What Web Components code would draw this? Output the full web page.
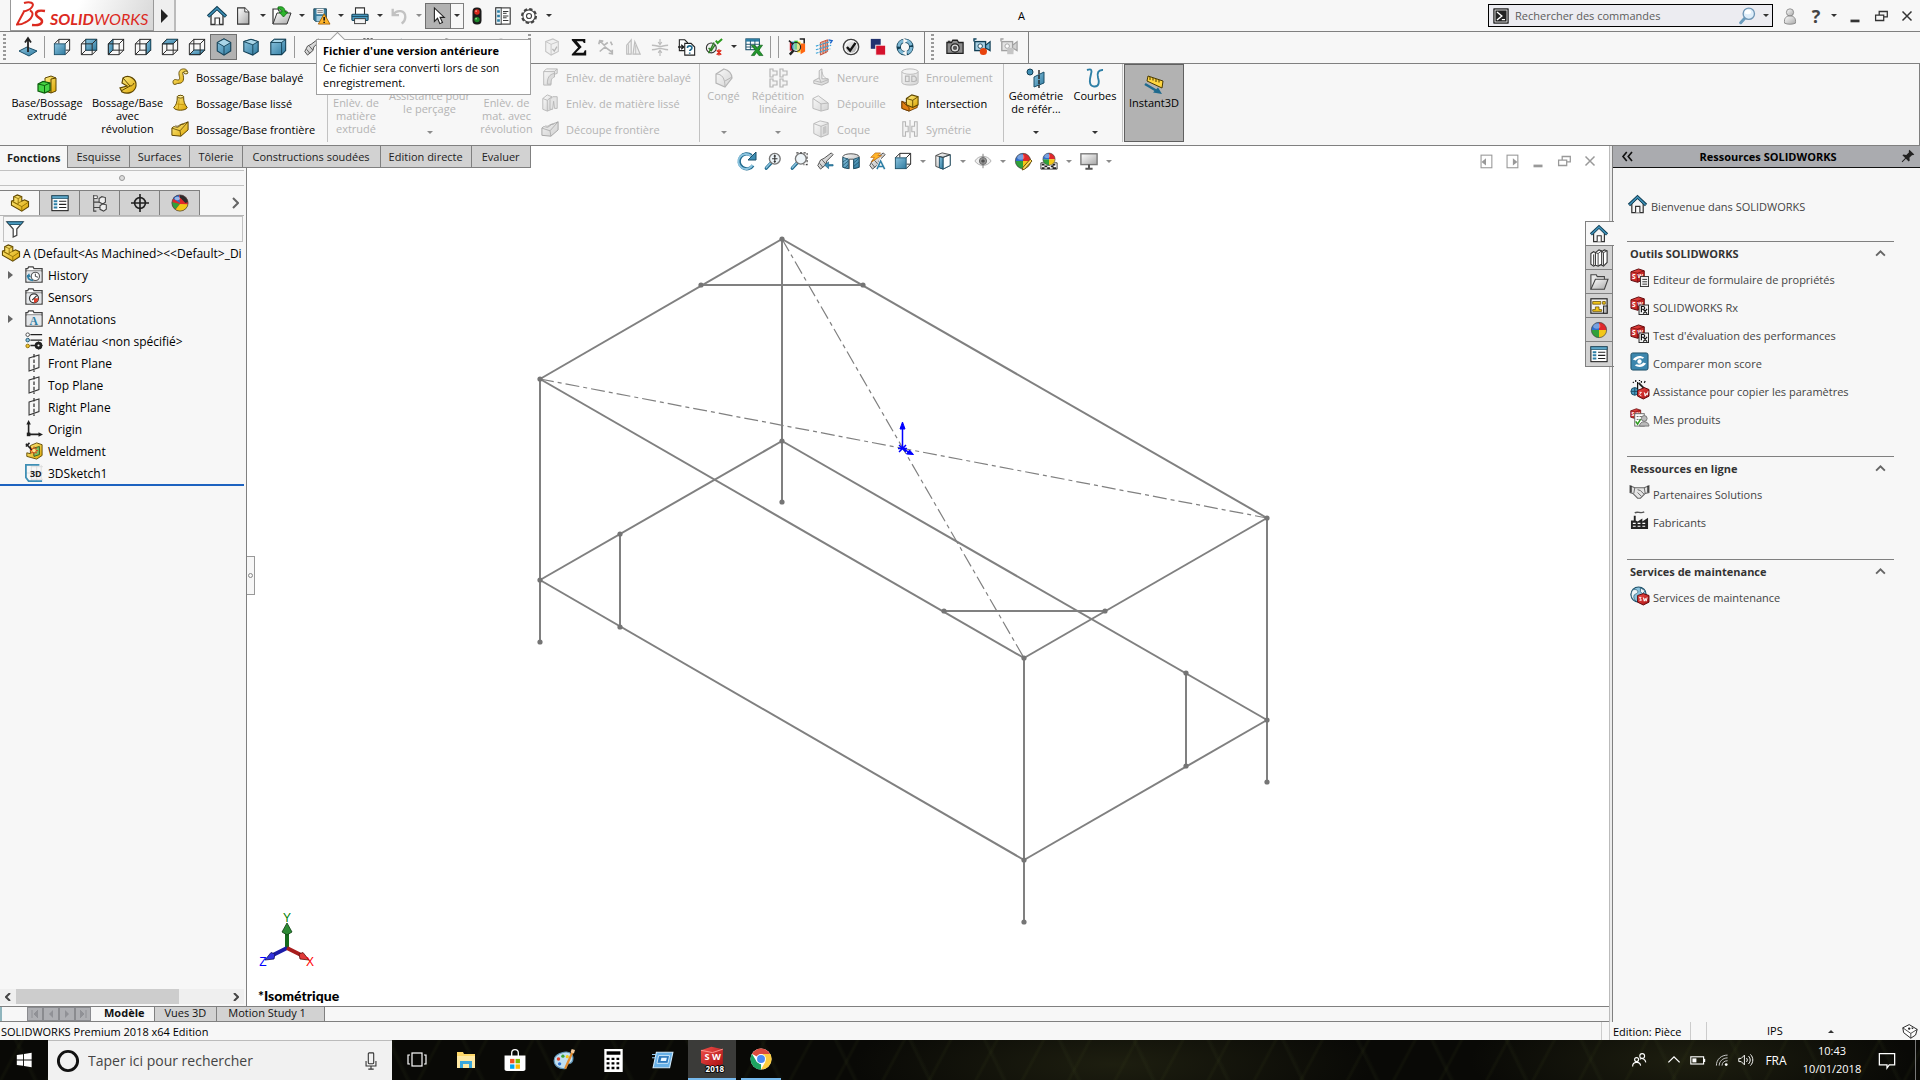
<!DOCTYPE html>
<html lang="fr">
<head>
<meta charset="utf-8">
<title>SOLIDWORKS Premium 2018 x64 Edition</title>
<style>
    html, body {
        margin: 0;
        height: 100%;
    }
    body {
        font-family: "Open Sans", "Noto Sans", sans-serif;
        font-size: 11px;
        line-height: 13px;
        color: #000;
        background: #f7f7f7;
        overflow: hidden;
        --line: #808080;
        --bar: #f7f7f7;
        --tab: #d2d2d2;
    }
</style>
</head>
<body>
<sw-app></sw-app>

<script>
/////////// Icons \\\\\\\\\ every icon is drawn on a 20x20 grid
const DEFS = `
<defs>
    <linearGradient id="blue" x1="0" y1="0" x2="1" y2="1"><stop offset="0" stop-color="#8cc4df"/><stop offset="1" stop-color="#2f7ba0"/></linearGradient>
    <linearGradient id="gold" x1="0" y1="0" x2="1" y2="1"><stop offset="0" stop-color="#fff08a"/><stop offset="1" stop-color="#dca400"/></linearGradient>
    <linearGradient id="steel" x1="0" y1="0" x2="1" y2="1"><stop offset="0" stop-color="#ffffff"/><stop offset="1" stop-color="#a8a8a8"/></linearGradient>
    <linearGradient id="red" x1="0" y1="0" x2="1" y2="1"><stop offset="0" stop-color="#f0504a"/><stop offset="1" stop-color="#a80d10"/></linearGradient>
</defs>`;

// wire cube with one blue face, used for the standard views
function viewCube(points) {
    return `<g fill="none" stroke="#2a2a2a" stroke-width="1.1"><rect x="6.5" y="1.5" width="12" height="12"/></g>
        <polygon points="${points}" fill="url(#blue)" stroke="#1b4f68"/>
        <path d="M1.5 6.5h12v12h-12zM1.5 6.5l5-5M13.5 6.5l5-5M13.5 18.5l5-5M1.5 18.5l5-5" fill="none" stroke="#2a2a2a" stroke-width="1.1"/>`;
}
// solid front face hides the edges behind it
const frontCube = `<path d="M6.5 6V1.5h12v12H14M1.5 6.5l5-5M13.5 6.5l5-5M13.5 18.5l5-5" fill="none" stroke="#2a2a2a" stroke-width="1.1"/>
    <rect x="1.5" y="6.5" width="12" height="12" fill="url(#blue)" stroke="#1b4f68"/>`;
// red SW box, top left part of most task pane icons
const swBox = `<path d="M1 4l8-3 6 2v9l-7 3-7-2z" fill="url(#red)" stroke="#5c0508"/><path d="M1 4l7 1.5 7-2.5M8 5.5V15" fill="none" stroke="#7a0a0c" stroke-width=".8"/>
    <text x="2.2" y="11.5" font-size="7" font-weight="700" fill="#fff">S</text><text x="8" y="11" font-size="6" font-weight="700" fill="#fff">W</text>`;
const folder = `<path d="M1 18V3h2l1-2h5l1 2h9v15z" fill="#fff" stroke="#444" stroke-width="1.4"/><path d="M1 5.5h18" stroke="#444"/><rect x="2" y="6" width="16" height="11" fill="#e4e7ea"/>`;
const planeShape = `<path d="M4.5 4.5l11-3.5v14l-11 4z" fill="none" stroke="#333" stroke-width="1.2"/><path d="M10 0v20" stroke="#333" stroke-width="1.4" stroke-dasharray="4 2"/>`;
const ball = `<circle cx="10" cy="10" r="8.5" fill="#f2f2f2"/><path d="M10 10V1.5A8.5 8.5 0 0 1 18.5 10z" fill="#e0282c"/><path d="M10 10h8.5A8.5 8.5 0 0 1 10 18.5z" fill="#f3c718"/>
    <path d="M10 10v8.5A8.5 8.5 0 0 1 1.5 10z" fill="#30a13a"/><path d="M10 10H1.5A8.5 8.5 0 0 1 10 1.5z" fill="#2e6fd0"/><ellipse cx="7.5" cy="5.5" rx="4" ry="3" fill="#fff" opacity=".35"/><circle cx="10" cy="10" r="8.5" fill="none" stroke="#444" stroke-width=".8"/>`;
const part = `<path d="M3 3l4-2 5 2v5l3-1.5 4.5 2V14L12 19 .5 12.5V8L3 7z" fill="url(#gold)" stroke="#5f4700" stroke-width="1.2"/>
    <path d="M3 3l5 2 4-2M8 5v5l4-2M.5 8l11.5 6 7.5-5M12 14v5M3 7v2l5 2.5V10" fill="none" stroke="#8b6a00" stroke-width=".9"/>`;
const house = `<path d="M4 9v9.5h12V9l-6-6z" fill="#f5f5f5" stroke="#333" stroke-width="1.3"/><path d="M8 18.5V12h4.5v6.5" fill="#fff" stroke="#333" stroke-width="1.2"/><path d="M1 10.5l9-8.5 9 8.5" fill="none" stroke="#123f55" stroke-width="3.4"/><path d="M1.5 10.2l8.5-8 8.5 8" fill="none" stroke="#3f93bb" stroke-width="1.5"/>`;
const listing = `<rect x="1" y="2" width="18" height="16.5" fill="#fff" stroke="#222" stroke-width="1.2"/><rect x="1" y="2" width="18" height="3" fill="#5da6c8" stroke="#1b4f68" stroke-width=".8"/>
    <path d="M3 8h4M3 11.5h4M3 15h4" stroke="#2d7fa6" stroke-width="2.2"/><path d="M9 8h8M9 11.5h8M9 15h8" stroke="#222" stroke-width="1.2"/>`;
const lens = `<path d="M2.5 18l5.5-6" stroke="#1f6a8e" stroke-width="3.6" stroke-linecap="round"/><path d="M2.5 17.5l5-5.5" stroke="#8cc4df" stroke-width="1.6" stroke-linecap="round"/><circle cx="12" cy="7.5" r="6" fill="#eef5f9" stroke="#777" stroke-width="1.5"/>`;
const torch = `<path d="M2 15l3 4 6-5 1-4 7-7-2-2-8 6-4 2z" fill="url(#steel)" stroke="#444"/><path d="M7 9l4 4.5M4 12.5l3.5 4.5" stroke="#555"/>`;
const camcorder = `<rect x="2" y="4" width="12" height="10" fill="#a8d0e3" stroke="#123f55" stroke-width="1.5"/><path d="M1 4V1h3M14 8l5-4v10l-5-3z" fill="#6cb1d1" stroke="#123f55" stroke-width="1.3"/><circle cx="8" cy="9" r="2.5" fill="#fff" stroke="#123f55"/>`;
const person = `<circle cx="10" cy="6" r="4" fill="url(#steel)" stroke="#888"/><path d="M4 18c-1-6 2-8 6-8s7 2 6 8c-3 1.5-9 1.5-12 0z" fill="url(#steel)" stroke="#888"/>`;

const ICONS = {
    home: house,
    newdoc: `<path d="M4 1h8l4.5 4.5V19H4z" fill="url(#steel)" stroke="#333" stroke-width="1.2"/><path d="M12 1v4.5h4.5" fill="#fff" stroke="#333"/>`,
    open: `<path d="M1 18V3h5l1 2h7v3" fill="#fff" stroke="#333" stroke-width="1.2"/><path d="M1 18L5 7h14l-4 11z" fill="url(#steel)" stroke="#333"/><path d="M6 1c5-1 7 1 7 5h3l-4.5 5L7 6h3c0-2-1-3-4-3z" fill="#2db52d" stroke="#10690f" stroke-width=".8"/>`,
    save: `<path d="M2 2h14v14H4l-2-2z" fill="#397e9f" stroke="#173f52"/><rect x="5" y="2" width="8" height="6" fill="#f3f3f3"/><path d="M6 4h6M6 6h6" stroke="#555" stroke-width=".8"/><rect x="5" y="10" width="7" height="6" fill="#9fcadd"/><path d="M13.5 7.5L20 19H7z" fill="#ffb52b" stroke="#9b5700" stroke-width=".9"/><path d="M13.5 11v4M13.5 16.5v1.3" stroke="#111" stroke-width="1.7"/>`,
    print: `<path d="M5 8V1h10v7" fill="#fff" stroke="#333" stroke-width="1.2"/><rect x="1" y="8" width="18" height="7" rx="1" fill="#4b9cc1" stroke="#16465d" stroke-width="1.2"/><path d="M1 10.5h18" stroke="#16465d"/><rect x="4" y="13" width="12" height="5.5" fill="#f4f4f4" stroke="#333"/>`,
    undo: `<path d="M3 2v7h7M3.5 8.5C8 2 17 4 17 11c0 3-1.5 5.5-4 7.5" fill="none" stroke="#c2c2c2" stroke-width="2.6"/>`,
    pointer: `<path d="M6 1v15l3.5-3.5L12 18.5l3-1.3-2.7-5.7h4.7z" fill="#fff" stroke="#222" stroke-width="1.2"/>`,
    traffic: `<rect x="5" y=".5" width="10" height="19" rx="4.5" fill="#1b1b1b"/><circle cx="10" cy="5.5" r="3" fill="#d8281c"/><circle cx="9" cy="4.5" r="1" fill="#ff9b8c"/><circle cx="10" cy="14" r="3" fill="#1d8a2b"/><circle cx="9" cy="13" r="1" fill="#8fe08f"/>`,
    listbox: `<rect x="2" y="1" width="16" height="18" fill="#fff" stroke="#333" stroke-width="1.2"/><rect x="2" y="1" width="6" height="18" fill="#eaf3f7" stroke="#333"/><path d="M3.5 5h3M3.5 10h3M3.5 15h3" stroke="#2d7fa6" stroke-width="3"/><path d="M10 5h6M10 7h4M10 10h6M10 12h4M10 15h6" stroke="#222"/>`,
    gear: `<circle cx="10" cy="10" r="7.6" fill="none" stroke="#444" stroke-width="2.6" stroke-dasharray="3.6 2.37"/><circle cx="10" cy="10" r="6.8" fill="#fff" stroke="#444" stroke-width="1.2"/><circle cx="10" cy="10" r="2.8" fill="none" stroke="#444" stroke-width="1.3"/>`,
    command: `<rect x="1" y="1" width="18" height="18" fill="#222" stroke="#111"/><rect x="2.5" y="2.5" width="15" height="15" fill="none" stroke="#fff"/><path d="M5 5l6 5-6 5" fill="none" stroke="#fff" stroke-width="1.8"/><path d="M11 14.5h4" stroke="#fff" stroke-width="1.5"/>`,
    lens: `<path d="M3 17.5l5-5.5" stroke="#6a9cbd" stroke-width="3.4" stroke-linecap="round"/><circle cx="12" cy="7.5" r="6.3" fill="#dfeefa" stroke="#6f96b5" stroke-width="1.5"/><ellipse cx="11" cy="5.5" rx="3.5" ry="2.5" fill="#fff"/>`,
    user: person,
    normal: `<path d="M1 14l8-4 10 4-8 5z" fill="url(#blue)" stroke="#1b4f68"/><path d="M10 15V2M7 5.5L10 1l3 4.5" fill="none" stroke="#222" stroke-width="1.8"/>`,
    front: frontCube,
    back: viewCube('6.5,1.5 18.5,1.5 18.5,13.5 6.5,13.5'),
    left: viewCube('1.5,6.5 6.5,1.5 6.5,13.5 1.5,18.5'),
    right: viewCube('13.5,6.5 18.5,1.5 18.5,13.5 13.5,18.5'),
    top: viewCube('1.5,6.5 6.5,1.5 18.5,1.5 13.5,6.5'),
    bottom: viewCube('1.5,18.5 6.5,13.5 18.5,13.5 13.5,18.5'),
    iso: `<path d="M10 1l7.5 4v9.5L10 19l-7.5-4.5V5z" fill="url(#blue)" stroke="#123f55" stroke-width="1.2"/><path d="M10 1l7.5 4L10 9.5 2.5 5z" fill="#a9d5e8" stroke="#123f55"/><path d="M10 9.5V19" stroke="#123f55"/>`,
    dimetric: `<path d="M2 4l8-2.5L18 4v11l-6 4-10-4z" fill="url(#blue)" stroke="#123f55" stroke-width="1.2"/><path d="M2 4l10 3.5L18 4l-8-2.5z" fill="#a9d5e8" stroke="#123f55"/><path d="M12 7.5V19" stroke="#123f55"/>`,
    trimetric: `<path d="M2 5l4-3.5h12.5V14L14 18.5H2z" fill="url(#blue)" stroke="#123f55" stroke-width="1.2"/><path d="M2 5l4-3.5h12.5L14 5z" fill="#a9d5e8" stroke="#123f55"/><path d="M14 5v13.5" stroke="#123f55"/>`,
    torch: torch,
    checkcube: `<path d="M3 4l8-3 6 3v11l-8 4-6-4z" fill="#e8e8e8" stroke="#888" stroke-width="1.2"/><path d="M3 4l6 3 8-3M9 7v12" fill="none" stroke="#888"/><path d="M10.5 12l2 2.5 3-5" fill="none" stroke="#666" stroke-width="1.5"/>`,
    sigma: `<path d="M2 1h15v4.5h-1.5L14 3.5H7.5L13 10l-6.5 6.5H15l1.5-3H18V19.5H2V18l7-7.5L2 2.5z" fill="#111"/>`,
    nodes: `<path d="M3 3l5 5 4-3M3 15l6-5 8 6M15 4l2 4M2 7l1-4 4 .5M13 17l4 .5V13" fill="none" stroke="#666" stroke-width="1.8"/>`,
    sections: `<path d="M3 18V8l5-6v16zM10 18l2-14 6 14z" fill="#e5e5e5" stroke="#777" stroke-width="1.3"/><path d="M5 18V7M13 18V8" stroke="#777"/>`,
    thickness: `<path d="M1 8c6 0 6 1.5 9 1.5S14 8 19 8M1 13c6 0 6-1.5 9-1.5s4 1.5 9 1.5" fill="none" stroke="#777" stroke-width="1.6"/><path d="M10 1v6M8 4.5l2 3 2-3M10 20v-6M8 16.5l2-3 2 3" fill="none" stroke="#777" stroke-width="1.3"/>`,
    docquestion: `<path d="M1.5 2h6l3 3v9h-9z" fill="#fff" stroke="#222" stroke-width="1.2"/><path d="M7.5 6h7l4 4v9h-11z" fill="#fff" stroke="#222" stroke-width="1.2"/><path d="M0 10h6M3.5 7.5l3 2.5-3 2.5" fill="none" stroke="#222" stroke-width="1.5"/><path d="M10.5 11c0-3 5-3 5 0 0 2-2.5 2-2.5 3.5M13 16v1.6" fill="none" stroke="#1f6a8e" stroke-width="1.8"/>`,
    checks: `<circle cx="7" cy="11" r="5.5" fill="#eee" stroke="#333" stroke-width="1.2"/><path d="M4 17l6-12M4 11l3 3 4-6" fill="none" stroke="#2b7d22" stroke-width="1.6"/><path d="M12 3l2 2.5L19 1" fill="none" stroke="#2c9a1d" stroke-width="2.2"/><path d="M13 13.5l5 5M18 13.5l-5 5M15.5 12.5v7" stroke="#de2a1b" stroke-width="1.6"/>`,
    excel: `<rect x="1" y="1" width="15" height="12" fill="#fff" stroke="#1b4f68" stroke-width="1.2"/><path d="M1 2.5h15" stroke="#2d7fa6" stroke-width="3"/><path d="M1 7h15M1 10h15M6 3v10M11 3v10" stroke="#1b4f68"/><path d="M7 8h4l2.5 3.5L16 8h3.5l-4 5.5L20 19.5h-4.5L13 16l-2.5 3.5H7l4.5-6z" fill="#22962c" stroke="#0c5d16" stroke-width=".7"/>`,
    rainbow: `<path d="M2 5h3v9H2z" fill="#d12"/><path d="M4 4h3v9H4z" fill="#28c"/><path d="M7 3h4v10H7z" fill="#2b3"/><path d="M10 4h4v12h-4z" fill="#fd2"/><path d="M14 6h5v9l-5 3z" fill="#f61"/><path d="M1 3l5 4M13 1h5v5" fill="none" stroke="#222" stroke-width="1.7"/><circle cx="9" cy="10" r="5" fill="#bfe0f0" fill-opacity=".5" stroke="#222" stroke-width="1.3"/><path d="M2 18.5l4-4.5" stroke="#222" stroke-width="2.6"/>`,
    flow: `<path d="M6 5l8-3v13l-8 4z" fill="#e6b7aa" stroke="#c14b33"/><path d="M9 5v13M12 3v14" stroke="#c14b33"/><path d="M1 9l16-5M1 13l17-5M1 17l16-5" stroke="#3aa3d8" stroke-width="1.3" stroke-dasharray="3 1"/><path d="M15 2l4 1-2 3" fill="none" stroke="#1660c8" stroke-width="1.5"/>`,
    approve: `<circle cx="10" cy="10" r="8.5" fill="#fff" stroke="#444" stroke-width="1.6"/><circle cx="10" cy="10" r="6.5" fill="url(#steel)"/><path d="M5.5 10l3.5 4 6-8.5" fill="none" stroke="#111" stroke-width="2.6"/>`,
    squares: `<rect x="2" y="1" width="11" height="11" fill="#22326f"/><rect x="7.5" y="8" width="11" height="11" fill="#d5122c" stroke="#f7f7f7"/>`,
    sync: `<circle cx="10" cy="10" r="7" fill="none" stroke="#123f55" stroke-width="5"/><circle cx="10" cy="10" r="7" fill="none" stroke="#7fb9d6" stroke-width="3.2" stroke-dasharray="8 3"/><path d="M8 0l5 3-5 4M12 20l-5-3 5-4" fill="#f7f7f7"/>`,
    camera: `<path d="M1 5h5l1.5-2.5h5L14 5h5v12H1z" fill="#8d8d8d" stroke="#222" stroke-width="1.4"/><circle cx="10" cy="11" r="4.6" fill="#ddd" stroke="#222" stroke-width="1.4"/><circle cx="10" cy="11" r="2.4" fill="#555"/><rect x="2" y="3" width="3" height="2" fill="#333"/>`,
    record: `${camcorder}<circle cx="11.5" cy="15" r="4" fill="#e8430d"/>`,
    recordstop: `${camcorder}<rect x="8" y="11" width="7" height="7" fill="#888"/>`,
    extrude: `<path d="M8 3l6-2 5 2v13l-5 2-6-2z" fill="url(#gold)" stroke="#5f4700"/><path d="M14 4v14M14 4l5-1" stroke="#5f4700" fill="none"/><path d="M1 9l5-2.5L13 8v7.5L7.5 18 1 16z" fill="#45d445" stroke="#0c5d0c" stroke-width="1.2"/><path d="M1 9l6.5 1.5L13 8M7.5 10.5V18" fill="none" stroke="#0c5d0c"/>`,
    revolve: `<path d="M5 3c6-4 14 1 13 8-1 6-8 9-14 6l-2-4 7-2-5-3z" fill="url(#gold)" stroke="#5f4700" stroke-width="1.2"/><path d="M5 3l7 8-9 5M12 11c2 0 3-1 4-3" fill="none" stroke="#5f4700"/>`,
    sweep: `<path d="M3 18c-2-3 0-6 3-5 4 1 4-1 3-5-1-5 2-7 5-7s5 2 4 5l-4-1c0-1-1-1-1 1 2 6 1 11-4 11-3 0-4 2-6 1z" fill="url(#gold)" stroke="#5f4700"/><ellipse cx="16.5" cy="5" rx="2.2" ry="1.6" fill="#fff0a0" stroke="#5f4700"/>`,
    loft: `<path d="M7 3c1-2 6-2 7 0 0 6 1 8 4 12-1 4-14 4-15 0 3-3 4-6 4-12z" fill="url(#gold)" stroke="#5f4700" stroke-width="1.1"/><ellipse cx="10.5" cy="3" rx="3.5" ry="1.5" fill="#fff0a0" stroke="#5f4700"/><path d="M6 11l9 1M8 18l1-12" stroke="#b98b00" stroke-width=".8"/>`,
    boundary: `<path d="M1 9c3-4 5 1 8-2s6-3 10-5v9l-8 7-10-1z" fill="url(#gold)" stroke="#5f4700" stroke-width="1.1"/><path d="M1 9l9 3 9-10M10 12l1 6M5 6c3 3 5-3 9-1" fill="none" stroke="#5f4700" stroke-width=".9"/>`,
    cutsweep: `<path d="M3 4l3-3h12v5l-3 1c-4 1-4 5-4 12H3z" fill="url(#steel)" stroke="#666"/><path d="M7 18c0-7 2-11 8-12v4c-3 1-4 3-4 8z" fill="#bbb" stroke="#666"/><path d="M3 4h12l3-3M15 4v3" fill="none" stroke="#666"/>`,
    cutloft: `<path d="M2 5l5-4 5 2v14l-5 2-5-2z" fill="url(#steel)" stroke="#666"/><path d="M10 6l3-3h5v13h-3l-1-8-1 9h-3z" fill="#ccc" stroke="#666"/><path d="M2 5l5 2 5-4M7 7v12" fill="none" stroke="#666"/>`,
    fillet: `<path d="M2 6l8-5c5 1 8 5 8 9l-7 9-9-4z" fill="url(#steel)" stroke="#666" stroke-width="1.2"/><path d="M2 6c6 0 9 4 9 13M11 13l7-4" fill="none" stroke="#666"/>`,
    pattern: `<path d="M2 1h3v2h4v4H5v2H2zM12 1h3v2h4v4h-4v2h-3zM2 11h3v2h4v4H5v2H2zM12 11h3v2h4v4h-4v2h-3z" fill="#eee" stroke="#666" stroke-width="1.2"/>`,
    rib: `<path d="M2 14l6-3V3l3-2v11l7 0v4l-7 3-9-2z" fill="url(#steel)" stroke="#666" stroke-width="1.1"/><path d="M11 4c1 5 3 7 6 8M2 14l8 2 8-3M8 11l2 5" fill="none" stroke="#666"/>`,
    draft: `<path d="M1 5l6-3 11 8v7l-8 2-9-3z" fill="url(#steel)" stroke="#666"/><path d="M1 5l9 6 8-1M10 11v8" fill="none" stroke="#666"/>`,
    shell: `<path d="M2 4l7-3 9 2v13l-8 3-8-4z" fill="url(#steel)" stroke="#666"/><path d="M2 4l8 3 8-3M10 7v12" fill="none" stroke="#666"/><path d="M12 8l4-2v8l-4 2z" fill="#888"/>`,
    wrap: `<path d="M1 4v12c0 4 18 4 18 0V4" fill="url(#steel)" stroke="#666"/><ellipse cx="10" cy="4" rx="9" ry="3" fill="#eee" stroke="#666"/><path d="M5 9h4v6H5zM12 9h3l2 2v3l-2 1h-3z" fill="none" stroke="#666" stroke-width="1.3"/>`,
    intersect: `<path d="M1 8l5 2v-4h4v8l8-4v5l-9 4-8-3z" fill="#f59a1c" stroke="#6b3a00"/><path d="M6 5l6-4 7 2v9l-6 3-7-3z" fill="url(#gold)" stroke="#5f4700" stroke-width="1.2"/><path d="M6 5l7 2 6-4M13 7v8" fill="none" stroke="#5f4700"/><path d="M1 8v8l8 3v-4z" fill="#e07d10" stroke="#6b3a00"/>`,
    mirror: `<path d="M2 2h3v5h3v6H5v5H2zM18 2h-3v5h-3v6h3v5h3z" fill="#eee" stroke="#666" stroke-width="1.2"/><path d="M10 0v20" stroke="#666" stroke-width="1.2"/>`,
    geometry: `<circle cx="4" cy="4" r="3" fill="#3f8fb5" stroke="#123f55"/><path d="M8 9l10-5v11L8 19z" fill="url(#blue)" stroke="#1b4f68"/><path d="M13 2v18" stroke="#222" stroke-width="1.4" stroke-dasharray="4 1"/>`,
    curves: `<path d="M2 2c5-2 5 1 4 4-1 4-3 12 3 12.5 6 .5 5-6 4-9-1-4 0-8 5-7.5" fill="none" stroke="#2d7fa6" stroke-width="1.9"/>`,
    instant: `<path d="M4 1l15 5-1 7L3 6z" fill="#ffd640" stroke="#4a3a00"/><path d="M6 2v3M9 3v2.5M12 4v3M15 5v2.5" stroke="#4a3a00"/><path d="M1 9l11 6.5" stroke="#1f6a8e" stroke-width="2.6"/><path d="M18 19l-9-1.5 5-5z" fill="#1f6a8e"/>`,
    rotate: `<path d="M16 14.5A7.5 7.5 0 1 1 14.5 4.5" fill="none" stroke="#1f6a8e" stroke-width="3.2"/><path d="M15.5 14A7.5 7.5 0 1 1 14 5" fill="none" stroke="#8cc4df" stroke-width="2"/><path d="M19 1v8h-8z" fill="#3f8fb5" stroke="#1b4f68"/>`,
    zoomfit: `${lens}<path d="M12 4.5v6M9 7.5h6M11 5l1-1.5L13 5M11 10l1 1.5 1-1.5" fill="none" stroke="#333" stroke-width="1.2"/>`,
    zoomarea: `${lens}<path d="M7 1h12v13h-4" fill="none" stroke="#444" stroke-width="1.2" stroke-dasharray="2.5 1.5"/>`,
    prevview: `${torch}<path d="M19 15.5h-5v3L9.5 14.5 14 11v3h5z" fill="#3f8fb5" stroke="#1b6284" stroke-width=".7"/>`,
    section: `<path d="M1 5c1-4 17-4 18 0v12l-6 1.5V8H8v10.5L1 17z" fill="url(#steel)" stroke="#444"/><path d="M1 6l6 2v10.5L1 17zM13 8l6-2v11l-6 1.5z" fill="url(#blue)" stroke="#1b4f68"/><path d="M1 11l6-4M1 15l6-5M3 18l4-4M13 12l6-5M13 16l6-5" stroke="#1b4f68" stroke-width=".8"/>`,
    dynann: `${torch}<path d="M8 1h6l-3 3h4L4 11l3-5H3z" fill="#ffb52b" stroke="#b45c00" stroke-width=".7"/><path d="M10 19l4-9 4.5 9M11.5 16h5" fill="none" stroke="#f7f7f7" stroke-width="3.5"/><path d="M10 19l4-9 4.5 9M11.5 16h5" fill="none" stroke="#2d7fa6" stroke-width="1.7"/>`,
    orient: frontCube,
    display: `<path d="M2 4l7-3 9 2v12l-8 4-8-3z" fill="url(#steel)" stroke="#444"/><path d="M10 6l8-3v12l-8 4z" fill="#fff" stroke="#1b4f68"/><path d="M6 5l4 1v13l-4-1.5z" fill="url(#blue)" stroke="#1b4f68"/><path d="M2 4l8 2 8-3" fill="none" stroke="#444"/>`,
    eye: `<path d="M1 10c4-7 14-7 18 0-4 6.5-14 6.5-18 0z" fill="#eee" stroke="#aaa"/><circle cx="10" cy="10" r="4" fill="#999" stroke="#666"/><circle cx="10" cy="10" r="1.8" fill="#333"/><path d="M10 2v16" stroke="#777"/>`,
    appearance: `${ball}<path d="M18 8l2 2-8 9-3 1 1-3z" fill="#ffd75a" stroke="#5f4700"/>`,
    scene: `<path d="M1 12h18v7H1z" fill="#fff" stroke="#333"/><path d="M2 13h3v2H2zM8 13h3v2H8zM14 13h3v2h-3zM5 15h3v2H5zM12 15h3v2h-3zM2 17h3v2H2zM8 17h3v2H8zM14 17h4v2h-4z" fill="#222"/><g transform="translate(2 0) scale(.8)">${ball}</g>`,
    monitor: `<rect x="1" y="2" width="18" height="12" fill="url(#steel)" stroke="#777" stroke-width="1.5"/><path d="M10 14v4M6 18.5h8" stroke="#555" stroke-width="2.2"/>`,
    part: part,
    props: listing,
    config: `<path d="M3 1v18h3M3 9h7M3 15h7" fill="none" stroke="#444" stroke-width="1.2"/><path d="M3 2h4v3H3z" fill="#fff" stroke="#444"/><path d="M9 5l3-2 4 1v5l-3 2-4-2zM10 13l3-2 4 1v5l-3 2-4-2z" fill="#eee" stroke="#444" stroke-width="1.2"/>`,
    dimx: `<circle cx="10" cy="10" r="6" fill="none" stroke="#222" stroke-width="1.8"/><path d="M10 0v20M0 10h20" stroke="#222" stroke-width="1.8"/>`,
    display2: `<circle cx="10" cy="10" r="9" fill="#e0282c"/><path d="M10 10L2 5a9 9 0 0 1 7-4z" fill="#2e6fd0"/><path d="M10 11L1 9a9 9 0 0 0 4 8z" fill="#30a13a"/><path d="M10 11l-5 6.5a9 9 0 0 0 14-6z" fill="#f3c718"/><path d="M10 1a9 9 0 0 1 9 8l-3 1-6-6z" fill="#2b2b2b"/><ellipse cx="7" cy="5" rx="3" ry="2" fill="#fff" opacity=".5"/><circle cx="10" cy="10" r="9" fill="none" stroke="#444" stroke-width=".8"/>`,
    filter: `<path d="M1 2h18l-7 8v7l-4 2V10z" fill="#fff" stroke="#444" stroke-width="1.4"/><path d="M1 2h18l-2.5 3h-13z" fill="#4b9cc1" stroke="#1b4f68"/>`,
    history: `${folder}<circle cx="11.5" cy="11.5" r="4.6" fill="#fff" stroke="#555" stroke-width="1.2"/><path d="M11.5 8.5v3l3 1" fill="none" stroke="#333"/><path d="M3 10c0 4 2 6 6 6" fill="none" stroke="#2d7fa6" stroke-width="1.8"/><path d="M1.5 12l3-4 2 4.5z" fill="#2d7fa6"/>`,
    sensors: `${folder}<circle cx="10" cy="11.5" r="5" fill="#fff" stroke="#333" stroke-width="1.3"/><path d="M10 11.5h5a5 5 0 0 1-5 5z" fill="#e0402c"/><path d="M8 13.5l5-5" stroke="#333" stroke-width="1.3"/>`,
    annotations: `${folder}<text x="5" y="16.5" font-family="Liberation Serif" font-size="13" font-weight="700" fill="#2d7fa6">A</text>`,
    material: `<path d="M6 3h13M6 9h13M6 15h6" stroke="#222" stroke-width="1.4"/><circle cx="3" cy="3" r="2" fill="#fff" stroke="#444"/><circle cx="3" cy="9" r="2" fill="#8cc4df" stroke="#1b4f68"/><circle cx="3" cy="15.5" r="2" fill="#f0c330" stroke="#8b6a00"/><circle cx="15" cy="15" r="3" fill="none" stroke="#222" stroke-width="2.6"/><path d="M15 10.5v9M10.5 15h9M12 12l6 6M18 12l-6 6" stroke="#222" stroke-width="1.3"/><circle cx="15" cy="15" r="1.2" fill="#fff"/>`,
    plane: planeShape,
    origin: `<path d="M4 3v13h12" fill="none" stroke="#222" stroke-width="1.8"/><path d="M1.5 5L4 0l2.5 5zM15 13.5l5 2.5-5 2.5z" fill="#222"/><rect x="2" y="14" width="4" height="4" fill="#222"/>`,
    weldment: `<path d="M6 4l7-3 6 2v12l-6 4-11-3v-4l4 1z" fill="url(#gold)" stroke="#5f4700"/><path d="M9 7l7-2v9l-6 2z" fill="#7dc463" stroke="#33591e"/><path d="M1 2l7 7M1 5l4-4" stroke="#222" stroke-width="1.8"/><path d="M10 5v9M5.5 9.5h9M7 6.5l6 6M13 6.5l-6 6" stroke="#d8501a" stroke-width="1.3"/><circle cx="10" cy="9.5" r="2" fill="#ffe48a"/>`,
    sketch3d: `<path d="M7 3h13M7 17h13M7 1v18M13 1v18M18 1v18M1 10h19" stroke="#ddd"/><path d="M16 1H1v14l3 4h15" fill="none" stroke="#3f8fb5" stroke-width="2"/><text x="5.5" y="14" font-family="Open Sans" font-size="10" font-weight="700" fill="#222">3D</text>`,
    collapse: `<path d="M9 4l-5 6 5 6M16 4l-5 6 5 6" fill="none" stroke="#111" stroke-width="2.2"/>`,
    pin: `<path d="M12 1l7 7-2 1-1-.5-4 4 .5 4-1.5 1.5-4-4-5 5-1-1 5-5-4-4L3.5 8l4 .5 4-4L11 3z" fill="#222"/>`,
    library: `<path d="M1 5l3-2 2 1v14l-2 1-3-2zM6 4l4-3 3 1v15l-4 2-3-1zM13 3l3-2 3 1v13l-4 4-2-1z" fill="#fff" stroke="#333" stroke-width="1.2"/><path d="M4 6v12M9 5v13M15 4v14M6 4l3 1 4-3M13 3l2 1 4-2" fill="none" stroke="#333"/>`,
    folder: `<path d="M1 18V2h6l1 2h8v4" fill="#e8e8e8" stroke="#444" stroke-width="1.2"/><path d="M1 18L6 7h14l-4 11z" fill="url(#steel)" stroke="#444" stroke-width="1.2"/>`,
    palette: `<rect x="1" y="2" width="18" height="16" fill="#f3f3f3" stroke="#222" stroke-width="1.3"/><path d="M3 5h9v3H3zM14 5h3v3h-3zM6 11h4v3h3v2H3v-2h3z" fill="#f3c718" stroke="#5f4700" stroke-width=".8"/><rect x="15" y="10" width="4" height="8" fill="#bbb" stroke="#222"/>`,
    ball: ball,
    swform: `${swBox}<rect x="11" y="9" width="8.5" height="10.5" fill="#f4f4f4" stroke="#333"/><path d="M13 12h5M13 14.5h5M13 17h5" stroke="#333"/>`,
    swrx: `${swBox}<rect x="9.5" y="9.5" width="10" height="10" fill="#f4f4f4" stroke="#222"/><path d="M12 17v-6h2c2 0 2 3 0 3h-2M14 14l4 4.5M18 13.5l-4 5" fill="none" stroke="#111" stroke-width="1.2"/>`,
    compare: `<rect x="1" y="1" width="18" height="18" rx="2" fill="#3c86ad" stroke="#1b4f68"/><path d="M3 8c3-4 8-5 12-2l-2 1c-3-1-5 0-7 2zM17 12c-3 4-8 5-12 2l2-1c3 1 5 0 7-2z" fill="#fff"/><circle cx="10" cy="10" r="2.3" fill="#fff"/>`,
    wizard: `<circle cx="5" cy="12" r="4" fill="#4b9cc1" stroke="#1b4f68"/><path d="M1 12h8M5 8v8" stroke="#1b4f68"/><path d="M8 10V2M3 2l1 1M6 0v2M12 1v2M16 1l-1 2M10 0v1" stroke="#111" stroke-width="1.3"/><path d="M9 3l8 8" stroke="#222" stroke-width="2"/><path d="M8 11l7-3 5 2v7l-6 3-6-3z" fill="url(#red)" stroke="#5c0508"/><path d="M10 13h2l-2 2 2 2M15 13l1 4 1-3 1 2 1-4" fill="none" stroke="#fff"/>`,
    products: `<g transform="scale(.75)">${swBox}</g><rect x="5" y="6" width="10" height="13" fill="#fff" stroke="#666"/><path d="M7 9h2M10 9h4M7 12h2M10 12h3" stroke="#666"/><path d="M6 14l2 3 3-5" fill="none" stroke="#2c9a1d" stroke-width="1.6"/><circle cx="15" cy="11" r="3" fill="#bbb" stroke="#777"/><path d="M10 19c0-6 10-6 10 0z" fill="#bbb" stroke="#777"/>`,
    handshake: `<path d="M0 3l5 2h3l4 0 3 0 5-2v7l-4 1-5 5-3 0-5-5-3-1z" fill="#e4e4e4" stroke="#666" stroke-width="1.1"/><path d="M5 5l-1 6M15 5l1 6M8 7l3 1 4 4M8 10l4 4" fill="none" stroke="#666"/><path d="M1 3v7M19 3v7" stroke="#333" stroke-width="1.6"/>`,
    factory: `<path d="M1 19V10l3 0V5h2v5l2 1 5-3v3l6-4v12z" fill="#222"/><path d="M3 13h3M8 13h3M13 13h3M3 16h3M8 16h3M13 16h3" stroke="#fff" stroke-width="1.2"/><path d="M5 2c3-2 6 1 10-1" fill="none" stroke="#555" stroke-width="1.4"/>`,
    service: `<circle cx="9" cy="9" r="8" fill="#8cc4df" stroke="#1b4f68" stroke-width="1.2"/><path d="M3 4c4-1 6 1 5 3s-4 1-4 4 1 3 2 5c-5-2-6-8-3-12zM11 2l5 3-3 3-2-2z" fill="#eef5f9" stroke="#1b4f68" stroke-width=".7"/><path d="M8 10l6-2 6 2v7l-6 3-6-3z" fill="url(#red)" stroke="#5c0508"/><path d="M12 12h-2l2 3h-2M14 12l1 4 1-3 1 3 1-4" fill="none" stroke="#fff"/>`,
    winprev: `<rect x="4.5" y="3.5" width="12" height="14" fill="none" stroke="#999" stroke-width="1.2"/><path d="M10 7v8l-5-4z" fill="#999"/>`,
    winnext: `<rect x="4.5" y="3.5" width="12" height="14" fill="none" stroke="#999" stroke-width="1.2"/><path d="M11 7v8l5-4z" fill="#999"/>`,
    minimize: `<rect x="5" y="14" width="10" height="3" fill="currentColor"/>`,
    restore: `<path d="M4 9h9v6H4zM8 9V5h9v6h-4" fill="none" stroke="currentColor" stroke-width="1.4"/>`,
    close: `<path d="M5 5l10 10M15 5L5 15" stroke="currentColor" stroke-width="1.6"/>`,
    keys: `<path d="M1 6l8-4 10 6-2 7-6 4L2 12z" fill="#fff" stroke="#222" stroke-width="1.2"/><path d="M1 6l10 7 8-5M11 13v6" fill="none" stroke="#222"/><circle cx="9" cy="7" r="1.5" fill="#222"/><path d="M12 6l2 1" stroke="#222" stroke-width="1.5"/>`,
    /////////// Taskbar \\\\\\\\\
    start: `<path d="M2 4.5l7-1v6H2zM10 3.3l8.5-1.3v7.5H10zM2 10.5h7v6l-7-1zM10 10.5h8.5V18L10 16.8z" fill="#fff"/>`,
    cortana: `<circle cx="10" cy="10" r="8" fill="none" stroke="#111" stroke-width="2.4"/>`,
    mic: `<rect x="7" y="1" width="6" height="12" rx="1" fill="none" stroke="#333" stroke-width="1.2"/><path d="M4.5 10v5.5h11V10M10 15.5V19M7 19h6" fill="none" stroke="#333" stroke-width="1.2"/>`,
    taskview: `<rect x="5" y="3" width="10" height="13" fill="none" stroke="#fff" stroke-width="1.2"/><path d="M3 5H1v9h2M17 5h2v9h-2" fill="none" stroke="#fff" stroke-width="1.2"/>`,
    explorer: `<path d="M1 2h6l1 2h11v14H1z" fill="#ffd868"/><path d="M1 6h18v12H1z" fill="#ffe9a3"/><path d="M4 18v-7h12v7h-3v-4H7v4z" fill="#3aa7dc"/>`,
    store: `<path d="M.5 6h19v12.5c0 1-1 1.5-2 1.5h-15c-1 0-2-.5-2-1.5z" fill="#fff"/><path d="M7 7V3.5a3 3 0 0 1 6 0V7" fill="none" stroke="#fff" stroke-width="1.2"/><path d="M5.5 9h4v4h-4z" fill="#f25022"/><path d="M10.5 9h4v4h-4z" fill="#7fba00"/><path d="M5.5 14h4v4h-4z" fill="#00a4ef"/><path d="M10.5 14h4v4h-4z" fill="#ffb900"/>`,
    paint: `<path d="M10 3c5-1 9 2 8 7-1 4-4 3-5 4s0 4-3 4c-5 0-9-3-9-7.5S5 4 10 3z" fill="#bfdff2" stroke="#5f93b5"/><circle cx="5" cy="9" r="1.6" fill="#e0402c"/><circle cx="9" cy="6.5" r="1.5" fill="#3aa334"/><circle cx="13" cy="7" r="1.5" fill="#f3c718"/><circle cx="6" cy="13.5" r="1.5" fill="#2e6fd0"/><path d="M11 18L18 2" stroke="#e08a2e" stroke-width="2"/><path d="M17 0l3 1-1 3-3-1z" fill="#f4c99b"/>`,
    calc: `<rect x="2" y="0" width="16" height="20" fill="#fff"/><rect x="4" y="2" width="12" height="3" fill="#000"/><path d="M4 8.5h11M4 12.5h11M4 16.5h11" stroke="#000" stroke-width="2" stroke-dasharray="2.5 1.8"/>`,
    run: `<path d="M4 3h15l-3 14H1z" fill="#68b1e8" stroke="#cfe9fb"/><path d="M6 6h10l-1.5 7H4.5z" fill="#2b78bd" stroke="#dff1fd" stroke-width=".8"/><path d="M8.5 8h5l-.7 3h-5z" fill="#eaf6ff"/><path d="M0 5h4M0 8h3" stroke="#9cd0f5"/>`,
    sw: `<path d="M0 2l9-3 10 2v13l-8 3-11-4z" fill="url(#red)"/><path d="M0 2l10 2 9-3" fill="none" stroke="#ff9c96" stroke-width=".8"/><text x="3" y="10" font-size="8" font-weight="700" fill="#fff">S</text><text x="9.5" y="10" font-size="8" font-weight="700" fill="#fff">W</text><text x="4" y="20.5" font-size="7" font-weight="700" fill="#fff" stroke="#000" stroke-width="1.5" paint-order="stroke">2018</text>`,
    chrome: `<circle cx="10" cy="10" r="9.5" fill="#fff"/><path d="M10 10L1.8 5.2A9.5 9.5 0 0 1 18.2 5.2z" fill="#dd4b3e"/><path d="M10 5.5h8.5A9.5 9.5 0 0 1 10 19.5l4-7z" fill="#fdcd3f"/><path d="M1.8 5.2l4.3 7.3 4 2.5L10 19.5A9.5 9.5 0 0 1 1.8 5.2z" fill="#1da462"/><circle cx="10" cy="10" r="4.5" fill="#fff"/><circle cx="10" cy="10" r="3.6" fill="#4a8af4"/>`,
    people: `<circle cx="14" cy="5" r="3" fill="none" stroke="#fff" stroke-width="1.4"/><circle cx="7" cy="9.5" r="2.5" fill="none" stroke="#fff" stroke-width="1.4"/><path d="M2 18c0-6 9-7 10-1M11 9c3-2 7 0 7.5 4" fill="none" stroke="#fff" stroke-width="1.4"/>`,
    chevup: `<path d="M3 13l7-7 7 7" fill="none" stroke="currentColor" stroke-width="1.6"/>`,
    fold: `<path d="M2 14l8-8 8 8" fill="none" stroke="currentColor" stroke-width="3.4"/>`,
    battery: `<rect x="1" y="6" width="16" height="9" fill="none" stroke="#fff" stroke-width="1.4"/><rect x="3" y="8" width="5" height="5" fill="#fff"/><rect x="17" y="8.5" width="2" height="4" fill="#fff"/>`,
    wifi: `<path d="M2 18C2 9 9 3 18 3M6 18c0-6 5-11 12-11M10 18c0-4 3-7 8-7" fill="none" stroke="#ccc" stroke-width="1.4"/><circle cx="16" cy="16.5" r="2" fill="#fff"/>`,
    volume: `<path d="M1 8h3l4-4v12l-4-4H1z" fill="none" stroke="#fff" stroke-width="1.2"/><path d="M10.5 7.5c1.5 1.5 1.5 3.5 0 5M13 5c3 3 3 7 0 10M15.5 3c4 4 4 10 0 14" fill="none" stroke="#fff" stroke-width="1.2"/>`,
    action: `<path d="M1.5 3h17v12.5h-6L10 19v-3.5H1.5z" fill="none" stroke="#fff" stroke-width="1.4"/>`
};

class SwIcon extends HTMLElement {
    constructor() {
        super();
        this.attachShadow({ mode: 'open' });
    }
    connectedCallback() {
        const size = this.getAttribute('size') || 18;
        this.shadowRoot.innerHTML = `
            <style>
                :host { display: inline-flex; flex: none; }
                :host([dim]) { filter: grayscale(1) opacity(.45); }
                svg { display: block; overflow: visible; font-family: "Open Sans", sans-serif; }
            </style>
            <svg width="${size}" height="${size}" viewBox="0 0 20 20" aria-hidden="true">${DEFS}${ICONS[this.getAttribute('name')]}</svg>`;
    }
}
customElements.define('sw-icon', SwIcon);

// small black triangle next to the buttons that open a menu
class SwCaret extends HTMLElement {
    constructor() {
        super();
        this.attachShadow({ mode: 'open' });
        this.shadowRoot.innerHTML = `
            <style>
                :host { display: block; width: 0; height: 0; border: 3px solid transparent; border-top-color: #333; border-bottom: 0; }
                :host([dim]) { border-top-color: #8c8c8c; }
            </style>`;
    }
}
customElements.define('sw-caret', SwCaret);

/////////// toolbar button : icon + optional menu arrow \\\\\\\\\
class SwTool extends HTMLElement {
    constructor() {
        super();
        this.attachShadow({ mode: 'open' });
    }
    connectedCallback() {
        const off = this.hasAttribute('off');
        const label = this.getAttribute('label') || this.getAttribute('icon');
        this.shadowRoot.innerHTML = `
            <style>
                :host { display: inline-flex; flex: none; height: 26px; }
                button {
                    display: flex; align-items: center; justify-content: center;
                    box-sizing: border-box; padding: 0; border: 0; background: none; color: inherit;
                }
                .main { width: var(--tool, 26px); }
                .menu { width: var(--arrow, 13px); }
                :host([pressed]) .main { background: #b2b2b2; border: 1px solid #707070; }
                :host([pressed]) .menu { border: 1px solid #808080; border-left: 0; }
            </style>
            <button class="main" aria-label="${label}" ${off ? 'disabled' : ''}><sw-icon name="${this.getAttribute('icon')}" size="${this.getAttribute('size') || 18}" ${off ? 'dim' : ''}></sw-icon></button>
            ${this.hasAttribute('menu') ? `<button class="menu" aria-label="${label} menu"><sw-caret ${off || this.hasAttribute('soft') ? 'dim' : ''}></sw-caret></button>` : ''}`;
    }
}
customElements.define('sw-tool', SwTool);

class SwTitlebar extends HTMLElement {
    constructor() {
        super();
        this.attachShadow({ mode: 'open' });
        this.shadowRoot.innerHTML = `
            <style>
                :host { display: flex; align-items: center; height: 31px; border-bottom: 1px solid var(--line); background: var(--bar); }
                .left, .right { display: flex; align-items: center; }
                .doc { flex: 1; text-align: center; }
                .logo { display: flex; align-items: center; box-sizing: border-box; width: 144px; height: 31px; margin-left: 10px; padding-left: 5px; border: 1px solid #999; border-width: 0 1px 1px; background: linear-gradient(115deg, #fff 45%, #d6d6d6); color: #dc2a1f; font: italic 16px/20px Lato, sans-serif; }
                .logo svg { flex: none; }
                .logo span { padding-top: 7px; }
                .more { width: 22px; height: 31px; margin-right: 28px; padding: 0; border: 0; border-right: 2px solid #bbb; background: #efefef; display: flex; align-items: center; justify-content: center; }
                .more::before { content: ""; border: 7px solid transparent; border-left: 7px solid #222; border-right: 0; }
                .right { justify-content: flex-end; color: #333; }
                form { display: flex; align-items: center; box-sizing: border-box; width: 285px; height: 23px; padding-left: 4px; border: 1px solid #000; background: #ececf1; margin-right: 4px; --arrow: 12px; }
                input { flex: 1; min-width: 0; margin-left: 6px; padding: 0; border: 0; outline: 0; background: none; font: inherit; }
                input::placeholder { color: #5c5c5c; opacity: 1; }
                .help { width: 26px; border: 0; padding: 0; background: none; font: 700 18px/24px "Open Sans", sans-serif; color: #444; }
                .right > sw-caret { margin: 0 5px 0 2px; }
            </style>
            <div class="left">
                <div class="logo">
                    <svg width="34" height="28" viewBox="0 0 34 28" aria-hidden="true">
                        <path d="M8 2c6-2 11 0 8 4-2 3-6 4-9 4.500M14 9.500c5 2 2 9-5 12-3 2-6 2-8 2l7-13" fill="none" stroke="#dc2a1f" stroke-width="2"/>
                        <path d="M29 10c-6-1-9 0-9 3 0 4 7 4 6 8-1 3-5 3.500-10 3" fill="none" stroke="#dc2a1f" stroke-width="2.4"/>
                    </svg>
                    <span><b>SOLID</b>WORKS</span>
                </div>
                <button class="more" aria-label="Menu"></button>
                <sw-tool icon="home" size="20"></sw-tool>
                <sw-tool icon="newdoc" menu></sw-tool>
                <sw-tool icon="open" size="20" menu></sw-tool>
                <sw-tool icon="save" menu></sw-tool>
                <sw-tool icon="print" menu></sw-tool>
                <sw-tool icon="undo" menu soft></sw-tool>
                <sw-tool icon="pointer" menu pressed></sw-tool>
                <sw-tool icon="traffic"></sw-tool>
                <sw-tool icon="listbox"></sw-tool>
                <sw-tool icon="gear" menu></sw-tool>
            </div>
            <div class="doc">A</div>
            <div class="right">
                <form>
                    <sw-icon name="command" size="16"></sw-icon>
                    <input type="text" aria-label="Rechercher des commandes" placeholder="Rechercher des commandes">
                    <sw-tool icon="lens" menu></sw-tool>
                </form>
                <sw-tool icon="user"></sw-tool>
                <button class="help" aria-label="Aide">?</button>
                <sw-caret></sw-caret>
                <sw-tool icon="minimize" label="Réduire"></sw-tool>
                <sw-tool icon="restore" label="Restaurer"></sw-tool>
                <sw-tool icon="close" label="Fermer"></sw-tool>
            </div>`;
    }
}
customElements.define('sw-titlebar', SwTitlebar);

class SwViewbar extends HTMLElement {
    constructor() {
        super();
        this.attachShadow({ mode: 'open' });
        this.shadowRoot.innerHTML = `
            <style>
                :host { display: flex; align-items: center; height: 29px; padding-bottom: 2px; border-bottom: 1px solid var(--line); background: var(--bar); --tool: 27px; }
                .grip { width: 3px; height: 26px; margin: 0 7px 0 3px; background: repeating-linear-gradient(#999 0 2px, transparent 2px 4px); }
                .first { margin-right: 8px; }
                .second { margin-left: 14px; }
                .sep { width: 1px; height: 22px; margin: 0 3px; background: #999; }
                .edge { align-self: stretch; width: 1px; margin: 0 3px -2px 6px; background: var(--line); }
                .wide { margin: 0 4px; }
            </style>
            <div class="grip first"></div>
            <sw-tool icon="normal" size="20"></sw-tool>
            <div class="sep"></div>
            <sw-tool icon="front"></sw-tool><sw-tool icon="back"></sw-tool><sw-tool icon="left"></sw-tool>
            <sw-tool icon="right"></sw-tool><sw-tool icon="top"></sw-tool><sw-tool icon="bottom"></sw-tool>
            <sw-tool icon="iso" pressed></sw-tool><sw-tool icon="dimetric"></sw-tool><sw-tool icon="trimetric"></sw-tool>
            <div class="sep"></div>
            <sw-tool icon="torch"></sw-tool><sw-tool icon="zoomfit"></sw-tool><sw-tool icon="zoomarea"></sw-tool>
            <sw-tool icon="rotate"></sw-tool><sw-tool icon="section"></sw-tool><sw-tool icon="display"></sw-tool>
            <sw-tool icon="eye"></sw-tool><sw-tool icon="scene"></sw-tool>
            <div class="grip second"></div>
            <sw-tool icon="checkcube" off></sw-tool><sw-tool icon="sigma"></sw-tool><sw-tool icon="nodes" off></sw-tool>
            <sw-tool icon="sections" off></sw-tool><sw-tool icon="thickness" off></sw-tool><sw-tool icon="docquestion"></sw-tool>
            <sw-tool icon="checks" menu></sw-tool><sw-tool icon="excel"></sw-tool>
            <div class="sep"></div><div class="sep wide"></div>
            <sw-tool icon="rainbow"></sw-tool><sw-tool icon="flow"></sw-tool><sw-tool icon="approve"></sw-tool>
            <sw-tool icon="squares"></sw-tool><sw-tool icon="sync"></sw-tool>
            <div class="edge"></div><div class="grip"></div>
            <sw-tool icon="camera"></sw-tool><sw-tool icon="record"></sw-tool><sw-tool icon="recordstop" off></sw-tool>
            <div class="edge"></div>`;
    }
}
customElements.define('sw-viewbar', SwViewbar);

/////////// Ribbon buttons, the text comes from the slot \\\\\\\\\
class SwBig extends HTMLElement {
    constructor() {
        super();
        this.attachShadow({ mode: 'open' });
    }
    connectedCallback() {
        const off = this.hasAttribute('off');
        const menu = this.hasAttribute('menu');
        this.shadowRoot.innerHTML = `
            <style>
                :host { display: flex; }
                button { display: flex; flex-direction: column; align-items: center; box-sizing: border-box; width: 100%; height: 78px; padding: 11px 0 0; border: 0; background: none; font: inherit; color: inherit; white-space: nowrap; }
                :host([menu]) button { padding-top: 4px; }
                :host([off]) { color: #b4b4b4; }
                :host([pressed]) button { background: #b2b2b2; border: 1px solid #606060; padding-top: 10px; }
                span { margin-top: 1px; flex: 1; }
                sw-caret { margin-bottom: 8px; }
            </style>
            <button ${off ? 'disabled' : ''}><sw-icon name="${this.getAttribute('icon')}" size="20" ${off ? 'dim' : ''}></sw-icon><span><slot></slot></span>${menu ? `<sw-caret ${off ? 'dim' : ''}></sw-caret>` : ''}</button>`;
    }
}
customElements.define('sw-big', SwBig);

class SwSmall extends HTMLElement {
    constructor() {
        super();
        this.attachShadow({ mode: 'open' });
    }
    connectedCallback() {
        const off = this.hasAttribute('off');
        this.shadowRoot.innerHTML = `
            <style>
                :host { display: flex; }
                :host([off]) { color: #b4b4b4; }
                button { display: flex; align-items: center; gap: 7px; height: 26px; padding: 0 0 0 3px; border: 0; background: none; font: inherit; color: inherit; white-space: nowrap; }
            </style>
            <button ${off ? 'disabled' : ''}><sw-icon name="${this.getAttribute('icon')}" ${off ? 'dim' : ''}></sw-icon><slot></slot></button>`;
    }
}
customElements.define('sw-small', SwSmall);

class SwRibbon extends HTMLElement {
    constructor() {
        super();
        this.attachShadow({ mode: 'open' });
        this.shadowRoot.innerHTML = `
            <style>
                :host { display: flex; align-items: flex-start; height: 81px; border: 1px solid var(--line); border-width: 0 1px 1px 0; background: var(--bar); }
                section { display: grid; height: 78px; border-right: 1px solid #c2c2c2; }
                .col { display: flex; flex-direction: column; }
                .base { grid-template-columns: 80px 81px 159px; padding-left: 7px; }
                .cut { grid-template-columns: 56px 91px 63px 161px; }
                .feat { grid-template-columns: 47px 62px 89px 105px; }
                .ref { grid-template-columns: 64px 54px; }
                .inst { width: 60px; margin-left: 1px; }
            </style>
            <section class="base">
                <sw-big icon="extrude">Base/Bossage<br>extrudé</sw-big>
                <sw-big icon="revolve">Bossage/Base<br>avec<br>révolution</sw-big>
                <div class="col">
                    <sw-small icon="sweep">Bossage/Base balayé</sw-small>
                    <sw-small icon="loft">Bossage/Base lissé</sw-small>
                    <sw-small icon="boundary">Bossage/Base frontière</sw-small>
                </div>
            </section>
            <section class="cut">
                <sw-big icon="extrude" off>Enlèv. de<br>matière<br>extrudé</sw-big>
                <sw-big icon="fillet" off menu>Assistance pour<br>le perçage</sw-big>
                <sw-big icon="revolve" off>Enlèv. de<br>mat. avec<br>révolution</sw-big>
                <div class="col">
                    <sw-small icon="cutsweep" off>Enlèv. de matière balayé</sw-small>
                    <sw-small icon="cutloft" off>Enlèv. de matière lissé</sw-small>
                    <sw-small icon="boundary" off>Découpe frontière</sw-small>
                </div>
            </section>
            <section class="feat">
                <sw-big icon="fillet" off menu>Congé</sw-big>
                <sw-big icon="pattern" off menu>Répétition<br>linéaire</sw-big>
                <div class="col">
                    <sw-small icon="rib" off>Nervure</sw-small>
                    <sw-small icon="draft" off>Dépouille</sw-small>
                    <sw-small icon="shell" off>Coque</sw-small>
                </div>
                <div class="col">
                    <sw-small icon="wrap" off>Enroulement</sw-small>
                    <sw-small icon="intersect">Intersection</sw-small>
                    <sw-small icon="mirror" off>Symétrie</sw-small>
                </div>
            </section>
            <section class="ref">
                <sw-big icon="geometry" menu>Géométrie<br>de référ...</sw-big>
                <sw-big icon="curves" menu>Courbes</sw-big>
            </section>
            <sw-big class="inst" icon="instant" pressed>Instant3D</sw-big>`;
    }
}
customElements.define('sw-ribbon', SwRibbon);

class SwTooltip extends HTMLElement {
    constructor() {
        super();
        this.attachShadow({ mode: 'open' });
        this.shadowRoot.innerHTML = `
            <style>
                :host { display: block; position: absolute; left: 316px; top: 39px; z-index: 10; box-sizing: border-box; width: 215px; padding: 3px 6px 4px; border: 1px solid #a0a0a0; background: #fff; line-height: 15px; }
                :host::before { content: ""; position: absolute; left: 15px; top: -6px; width: 10px; height: 10px; border: 1px solid #a0a0a0; border-width: 1px 0 0 1px; background: #fff; transform: rotate(45deg); }
                b { display: block; margin-bottom: 2px; }
            </style>
            <b><slot name="title"></slot></b>
            <slot>...</slot>`;
    }
}
customElements.define('sw-tooltip', SwTooltip);

class SwCommandTabs extends HTMLElement {
    constructor() {
        super();
        this.attachShadow({ mode: 'open' });
        this.shadowRoot.innerHTML = `
            <style>
                :host { display: flex; height: 22px; }
                button { box-sizing: border-box; padding: 0 8px; border: 1px solid var(--line); border-width: 0 1px 1px 0; background: var(--tab); font: inherit; color: #222; white-space: nowrap; }
                .on { padding: 0 7px; border-bottom: 0; background: var(--bar); font-weight: 700; }
                .long { padding: 0 10px; }
            </style>
            <button class="on">Fonctions</button><button>Esquisse</button><button>Surfaces</button><button>Tôlerie</button>
            <button class="long">Constructions soudées</button><button>Edition directe</button><button class="long">Evaluer</button>`;
    }
}
customElements.define('sw-command-tabs', SwCommandTabs);

/////////// Feature tree on the left \\\\\\\\\
class SwNode extends HTMLElement {
    constructor() {
        super();
        this.attachShadow({ mode: 'open' });
    }
    connectedCallback() {
        this.shadowRoot.innerHTML = `
            <style>
                :host { display: flex; align-items: center; height: 22px; padding-left: 25px; gap: 5px; position: relative; white-space: nowrap; font-size: 12px; }
                :host([root]) { padding-left: 2px; gap: 3px; }
                :host([branch])::before { content: ""; position: absolute; left: 8px; border: 4px solid transparent; border-left: 5px solid #666; border-right: 0; }
            </style>
            <sw-icon name="${this.getAttribute('icon')}"></sw-icon><slot></slot>`;
    }
}
customElements.define('sw-node', SwNode);

class SwTree extends HTMLElement {
    constructor() {
        super();
        this.attachShadow({ mode: 'open' });
        this.shadowRoot.innerHTML = `
            <style>
                :host { display: flex; flex-direction: column; min-height: 0; background: var(--bar); border-right: 1px solid var(--line); }
                .handle { display: flex; align-items: center; justify-content: center; height: 14px; margin: 2px 2px 4px 0; border: 1px solid #c2c2c2; border-width: 1px 0; }
                .handle::before { content: ""; width: 4px; height: 4px; border: 1px solid #999; border-radius: 50%; background: #ddd; }
                nav { display: flex; align-items: stretch; height: 25px; margin-right: 2px; border-bottom: 1px solid #b5b5b5; }
                nav button { display: flex; align-items: center; justify-content: center; box-sizing: border-box; width: 40px; padding: 0; border: 1px solid var(--line); border-left: 0; border-bottom: 0; background: var(--tab); }
                nav .on { background: var(--bar); }
                nav .next { width: auto; margin-left: auto; padding-right: 5px; border: 0; background: none; }
                .filter { display: flex; align-items: center; height: 24px; margin: 0 3px; border: 1px solid #c2c2c2; padding-left: 2px; }
                .filter input { flex: 1; min-width: 0; border: 0; background: none; font: inherit; }
                .nodes { margin-right: 2px; border-bottom: 2px solid #1d62c0; }
                .scroll { display: flex; align-items: center; height: 15px; margin-top: auto; margin-bottom: 2px; margin-right: 2px; background: #efefef; }
                .scroll button { display: flex; align-items: center; justify-content: center; width: 16px; height: 15px; padding: 0; border: 0; background: none; }
                .track { flex: 1; height: 15px; }
                .thumb { width: 77%; height: 15px; background: #cdcdcd; }
            </style>
            <div class="handle"></div>
            <nav>
                <button class="on" aria-label="Arbre"><sw-icon name="part"></sw-icon></button>
                <button aria-label="Propriétés"><sw-icon name="props"></sw-icon></button>
                <button aria-label="Configurations"><sw-icon name="config"></sw-icon></button>
                <button aria-label="DimXpert"><sw-icon name="dimx"></sw-icon></button>
                <button aria-label="Affichage"><sw-icon name="display2"></sw-icon></button>
                <button class="next" aria-label="Suivant"><svg width="7" height="12" viewBox="0 0 7 12"><path d="M1 1l5 5-5 5" fill="none" stroke="#666" stroke-width="2"/></svg></button>
            </nav>
            <label class="filter"><sw-icon name="filter"></sw-icon><input type="text" aria-label="Filtrer"></label>
            <div class="nodes">
                <sw-node icon="part" root>A (Default&lt;As Machined&gt;&lt;&lt;Default&gt;_Di</sw-node>
                <sw-node icon="history" branch>History</sw-node>
                <sw-node icon="sensors">Sensors</sw-node>
                <sw-node icon="annotations" branch>Annotations</sw-node>
                <sw-node icon="material">Matériau &lt;non spécifié&gt;</sw-node>
                <sw-node icon="plane">Front Plane</sw-node>
                <sw-node icon="plane">Top Plane</sw-node>
                <sw-node icon="plane">Right Plane</sw-node>
                <sw-node icon="origin">Origin</sw-node>
                <sw-node icon="weldment">Weldment</sw-node>
                <sw-node icon="sketch3d">3DSketch1</sw-node>
            </div>
            <div class="scroll">
                <button aria-label="Gauche"><svg width="6" height="8" viewBox="0 0 6 8"><path d="M5 0L1 4l4 4" fill="none" stroke="#444" stroke-width="2"/></svg></button>
                <div class="track"><div class="thumb"></div></div>
                <button aria-label="Droite"><svg width="6" height="8" viewBox="0 0 6 8"><path d="M1 0l4 4-4 4" fill="none" stroke="#444" stroke-width="2"/></svg></button>
            </div>`;
    }
}
customElements.define('sw-tree', SwTree);

/////////// 3D sketch. Points are in sheet units, lines join them by name \\\\\\\\\
const POINTS = {
    A: [782, 239], B: [863, 285], C: [701, 285], D: [540, 379], E: [1267, 518], F: [1024, 658],
    G: [782, 441], H: [782, 502], I: [620, 534], J: [540, 580], K: [540, 642], L: [620, 627],
    M: [944, 611], N: [1105, 611], O: [1186, 673], P: [1267, 720], Q: [1267, 782], R: [1186, 766],
    S: [1024, 860], T: [1024, 922]
};
const EDGES = ['AD', 'AE', 'DF', 'FE', 'CB', 'MN', 'AH', 'DK', 'GJ', 'GP', 'JS', 'SP', 'FT', 'EQ', 'IL', 'OR'];
const AXES = ['AF', 'DE'];

class SwCanvas extends HTMLElement {
    constructor() {
        super();
        const line = (pair) => `<path d="M${POINTS[pair[0]]}L${POINTS[pair[1]]}"/>`;
        const dot = (p) => `<circle cx="${p[0]}" cy="${p[1]}" r="2.6"/>`;
        this.attachShadow({ mode: 'open' });
        this.shadowRoot.innerHTML = `
            <style>
                :host { display: block; position: relative; background: #fff; overflow: hidden; }
                .sheet { display: block; width: 100%; height: 100%; }
                .hud { position: absolute; top: 2px; left: 0; right: 6px; display: flex; justify-content: center; --arrow: 14px; }
                .win { position: absolute; top: 2px; right: 6px; display: flex; color: #999; }
                .split { position: absolute; left: 0; top: 410px; display: flex; align-items: center; justify-content: center; width: 7px; height: 37px; border: 1px solid #999; border-left: 0; background: var(--bar); }
                .split::before { content: ""; width: 3px; height: 3px; border: 1px solid #888; border-radius: 50%; }
                .name { position: absolute; left: 11px; bottom: 1px; font: 900 14px/18px Lato, sans-serif; }
            </style>
            <svg class="sheet" viewBox="247 146 1362 860" aria-label="3DSketch1">
                <g fill="none" stroke="#808080" stroke-width="2">${EDGES.map(line).join('')}</g>
                <g fill="none" stroke="#808080" stroke-width="1.2" stroke-dasharray="14 4 4 4">${AXES.map(line).join('')}</g>
                <g fill="#757575">${Object.values(POINTS).map(dot).join('')}</g>
                <g stroke="#00f" fill="#00f" stroke-width="1.5">
                    <path d="M902.5 448V428M898 448.5h9M899 445l7 7M906 445l-7 7M902.5 448l6 4"/>
                    <path d="M902.5 422l2.5 7h-5zM913.5 454.5l-7-.5 3-4z" stroke-width="1"/>
                </g>
                <g stroke-width="4" fill="none">
                    <path d="M287 948v-18" stroke="#156b1c"/><path d="M287 948l-14 7" stroke="#1c1ca8"/><path d="M287 948l14 7" stroke="#a81c1c"/>
                </g>
                <path d="M287 923l5 9-5 3-5-3z" fill="#2c8a34" stroke="#0b3d10" stroke-width=".8"/>
                <path d="M265 960l6-7.5 4 1.5-1 5z" fill="#3333e0" stroke="#10105c" stroke-width=".8"/>
                <path d="M309 960l-6-7.5-4 1.5 1 5z" fill="#e03a3a" stroke="#5c1010" stroke-width=".8"/>
                <g font-family="Liberation Sans" font-size="12" text-anchor="middle">
                    <text x="287" y="922" fill="#008000">Y</text><text x="310" y="966" fill="#f00">X</text><text x="263" y="966" fill="#00f">Z</text>
                </g>
            </svg>
            <div class="hud">
                <sw-tool icon="rotate" size="20"></sw-tool><sw-tool icon="zoomfit"></sw-tool><sw-tool icon="zoomarea"></sw-tool>
                <sw-tool icon="prevview"></sw-tool><sw-tool icon="section"></sw-tool><sw-tool icon="dynann"></sw-tool>
                <sw-tool icon="orient" menu soft></sw-tool><sw-tool icon="display" menu soft></sw-tool><sw-tool icon="eye" menu soft></sw-tool>
                <sw-tool icon="appearance"></sw-tool><sw-tool icon="scene" menu soft></sw-tool><sw-tool icon="monitor" menu soft></sw-tool>
            </div>
            <div class="win">
                <sw-tool icon="winprev"></sw-tool><sw-tool icon="winnext"></sw-tool><sw-tool icon="minimize" label="Réduire la vue"></sw-tool>
                <sw-tool icon="restore" label="Restaurer la vue"></sw-tool><sw-tool icon="close" label="Fermer la vue"></sw-tool>
            </div>
            <div class="split"></div>
            <div class="name">*Isométrique</div>`;
    }
}
customElements.define('sw-canvas', SwCanvas);

class SwSheetTabs extends HTMLElement {
    constructor() {
        super();
        this.attachShadow({ mode: 'open' });
        this.shadowRoot.innerHTML = `
            <style>
                :host { display: flex; height: 14px; border: 1px solid var(--line); border-width: 1px 0; background: var(--bar); padding-left: 27px; }
                :host::before { content: ""; width: 2px; margin: 0 25px 0 -27px; background: #8fb5bd; }
                button { padding: 0 10px 2px; border: 0; border-right: 1px solid var(--line); background: var(--tab); font: inherit; line-height: 12px; color: #111; white-space: nowrap; }
                .on { padding: 0 9px 2px 13px; background: var(--bar); font-weight: 700; }
                .last { padding-right: 18px; padding-left: 11px; }
                .nav { display: flex; align-items: center; justify-content: center; box-sizing: border-box; width: 16px; padding: 0; border: 1px solid #8a8b8f; background: #aeafb3; }
            </style>
            <button class="nav" aria-label="Premier"><svg width="8" height="8"><path d="M1 0v8M7 0L3 4l4 4" fill="#909196" stroke="#909196"/></svg></button>
            <button class="nav" aria-label="Précédent"><svg width="8" height="8"><path d="M6 0L2 4l4 4z" fill="#909196"/></svg></button>
            <button class="nav" aria-label="Suivant"><svg width="8" height="8"><path d="M2 0l4 4-4 4z" fill="#909196"/></svg></button>
            <button class="nav" aria-label="Dernier"><svg width="8" height="8"><path d="M7 0v8M1 0l4 4-4 4" fill="#909196" stroke="#909196"/></svg></button>
            <button class="on">Modèle</button><button>Vues 3D</button><button class="last">Motion Study 1</button>`;
    }
}
customElements.define('sw-sheet-tabs', SwSheetTabs);

/////////// Task pane \\\\\\\\\
class SwLink extends HTMLElement {
    constructor() {
        super();
        this.attachShadow({ mode: 'open' });
    }
    connectedCallback() {
        this.shadowRoot.innerHTML = `
            <style>
                :host { display: block; height: 28px; }
                a { display: flex; align-items: center; gap: 4px; height: 28px; color: #444; text-decoration: none; white-space: nowrap; }
                sw-icon { margin-bottom: 4px; }
            </style>
            <a href="#"><sw-icon name="${this.getAttribute('icon')}" size="19"></sw-icon><slot></slot></a>`;
    }
}
customElements.define('sw-link', SwLink);

class SwGroup extends HTMLElement {
    constructor() {
        super();
        this.attachShadow({ mode: 'open' });
    }
    connectedCallback() {
        this.shadowRoot.innerHTML = `
            <style>
                :host { display: block; margin: 0 26px 23px 14px; border-top: 1px solid var(--line); padding-left: 3px; }
                header { display: flex; align-items: center; justify-content: space-between; height: 23px; padding-right: 8px; color: #333; }
                h2 { margin: 0; font-size: 11px; }
                button { padding: 0; border: 0; background: none; color: #666; display: flex; }
            </style>
            <header><h2>${this.getAttribute('heading')}</h2><button aria-label="Replier"><sw-icon name="fold" size="11"></sw-icon></button></header>
            <slot></slot>`;
    }
}
customElements.define('sw-group', SwGroup);

class SwTaskPane extends HTMLElement {
    constructor() {
        super();
        this.attachShadow({ mode: 'open' });
        this.shadowRoot.innerHTML = `
            <style>
                :host { display: block; position: relative; box-sizing: border-box; width: 308px; border-left: 1px solid var(--line); background: var(--bar); }
                .head { display: flex; align-items: center; justify-content: space-between; height: 20px; padding: 0 5px 1px 7px; border-bottom: 1px solid #111; background: #aaabaf; font-weight: 700; }
                .head button { display: flex; padding: 0; border: 0; background: none; }
                .welcome { margin: 24px 0 21px 15px; }
                .side { position: absolute; left: -28px; top: 75px; display: flex; flex-direction: column; border: 1px solid var(--line); border-right: 0; }
                .side button { display: flex; align-items: center; justify-content: center; box-sizing: border-box; width: 26px; height: 24px; padding: 0; border: 0; border-bottom: 1px solid var(--line); background: var(--tab); }
                .side button:first-child { width: 28px; padding-right: 2px; background: var(--bar); }
                .side button:last-child { border-bottom: 0; }
            </style>
            <div class="head">
                <button aria-label="Replier le volet"><sw-icon name="collapse" size="15"></sw-icon></button>
                Ressources SOLIDWORKS
                <button aria-label="Epingler"><sw-icon name="pin" size="14"></sw-icon></button>
            </div>
            <div class="welcome"><sw-link icon="home">Bienvenue dans SOLIDWORKS</sw-link></div>
            <sw-group heading="Outils SOLIDWORKS">
                <sw-link icon="swform">Editeur de formulaire de propriétés</sw-link>
                <sw-link icon="swrx">SOLIDWORKS Rx</sw-link>
                <sw-link icon="swrx">Test d'évaluation des performances</sw-link>
                <sw-link icon="compare">Comparer mon score</sw-link>
                <sw-link icon="wizard">Assistance pour copier les paramètres</sw-link>
                <sw-link icon="products">Mes produits</sw-link>
            </sw-group>
            <sw-group heading="Ressources en ligne">
                <sw-link icon="handshake">Partenaires Solutions</sw-link>
                <sw-link icon="factory">Fabricants</sw-link>
            </sw-group>
            <sw-group heading="Services de maintenance">
                <sw-link icon="service">Services de maintenance</sw-link>
            </sw-group>
            <div class="side">
                <button aria-label="Ressources"><sw-icon name="home"></sw-icon></button>
                <button aria-label="Bibliothèque"><sw-icon name="library"></sw-icon></button>
                <button aria-label="Explorateur"><sw-icon name="folder"></sw-icon></button>
                <button aria-label="Palette de vues"><sw-icon name="palette"></sw-icon></button>
                <button aria-label="Apparences"><sw-icon name="ball"></sw-icon></button>
                <button aria-label="Propriétés"><sw-icon name="props"></sw-icon></button>
            </div>`;
    }
}
customElements.define('sw-task-pane', SwTaskPane);

class SwStatus extends HTMLElement {
    constructor() {
        super();
        this.attachShadow({ mode: 'open' });
        this.shadowRoot.innerHTML = `
            <style>
                :host { display: flex; align-items: stretch; height: 18px; background: var(--bar); line-height: 20px; white-space: nowrap; }
                .app { flex: 1; padding-left: 1px; }
                .cell { border-left: 1px solid #ccc; padding: 0 3px; width: 1px; }
                .edit { width: 74px; }
                .gap { width: 9px; }
                .unit { display: flex; justify-content: space-between; align-items: center; width: 67px; padding: 0 8px 0 60px; }
                .unit i { border: 3px solid transparent; border-bottom-color: #333; border-top: 0; }
                sw-icon { margin-left: 60px; padding: 0 2px 0 0; align-items: center; }
            </style>
            <div class="app">SOLIDWORKS Premium 2018 x64 Edition</div>
            <div class="cell"></div><div class="cell edit">Edition: Pièce</div><div class="cell gap"></div>
            <div class="cell unit"><span>IPS</span><i></i></div>
            <sw-icon name="keys" size="16"></sw-icon>`;
    }
}
customElements.define('sw-status', SwStatus);

class WinTaskbar extends HTMLElement {
    constructor() {
        super();
        this.attachShadow({ mode: 'open' });
        this.shadowRoot.innerHTML = `
            <style>
                :host {
                    display: flex; align-items: stretch; height: 40px; color: #fff; font-size: 12px;
                    background:
                        repeating-linear-gradient(118deg, transparent 0 17px, rgba(70, 80, 30, .1) 19px 20px, transparent 22px 41px),
                        repeating-linear-gradient(64deg, transparent 0 29px, rgba(60, 70, 35, .12) 31px 32px, transparent 35px 67px),
                        radial-gradient(ellipse 260px 60px at 58% 60%, rgba(60, 62, 30, .4), transparent),
                        radial-gradient(ellipse 220px 60px at 88% 50%, rgba(60, 62, 30, .4), transparent),
                        #090906;
                }
                button { display: flex; align-items: center; justify-content: center; box-sizing: border-box; padding: 0; border: 0; background: none; color: inherit; font: inherit; }
                .app { width: 50px; }
                .narrow { width: 48px; }
                .active { width: 48px; background: #3b3b39; border-bottom: 2px solid #76b9ed; }
                .open { width: 40px; margin-left: 5px; border-bottom: 2px solid #76b9ed; }
                form { display: flex; align-items: center; box-sizing: border-box; width: 344px; padding: 0 12px 0 8px; background: #f1f1f1; border-top: 1px solid #bbb; }
                input { flex: 1; min-width: 0; margin-left: 8px; padding: 0; border: 0; outline: 0; background: none; font: 14px/20px "Open Sans", sans-serif; }
                input::placeholder { color: #444; opacity: 1; }
                .tray { display: flex; margin-left: auto; }
                .clock { width: 76px; flex-direction: column; line-height: 18px; font-size: 11px; padding-bottom: 1px; }
                .lang { width: 36px; }
                .tray .t { width: 24px; }
                .tray .people { width: 46px; }
                .note { width: 34px; margin-right: 11px; }
                .show { width: 5px; border-left: 1px solid #777; }
            </style>
            <button class="narrow" aria-label="Démarrer"><sw-icon name="start"></sw-icon></button>
            <form>
                <sw-icon name="cortana" size="24"></sw-icon>
                <input type="text" aria-label="Rechercher" placeholder="Taper ici pour rechercher">
                <sw-icon name="mic"></sw-icon>
            </form>
            <button class="app" aria-label="Vue des tâches"><sw-icon name="taskview" size="20"></sw-icon></button>
            <button class="narrow" aria-label="Explorateur"><sw-icon name="explorer" size="20"></sw-icon></button>
            <button class="app" aria-label="Store"><sw-icon name="store" size="22"></sw-icon></button>
            <button class="narrow" aria-label="Paint"><sw-icon name="paint" size="22"></sw-icon></button>
            <button class="app" aria-label="Calculatrice"><sw-icon name="calc" size="23"></sw-icon></button>
            <button class="app" aria-label="Exécuter"><sw-icon name="run" size="22"></sw-icon></button>
            <button class="active" aria-label="SOLIDWORKS 2018"><sw-icon name="sw" size="23"></sw-icon></button>
            <button class="open" aria-label="Chrome"><sw-icon name="chrome" size="22"></sw-icon></button>
            <div class="tray">
                <button class="people" aria-label="Contacts"><sw-icon name="people" size="16"></sw-icon></button>
                <button class="t" aria-label="Icônes cachées"><sw-icon name="chevup" size="16"></sw-icon></button>
                <button class="t" aria-label="Batterie"><sw-icon name="battery" size="16"></sw-icon></button>
                <button class="t" aria-label="Réseau"><sw-icon name="wifi" size="14"></sw-icon></button>
                <button class="t" aria-label="Volume"><sw-icon name="volume" size="16"></sw-icon></button>
                <button class="lang">FRA</button>
                <button class="clock"><span>10:43</span><span>10/01/2018</span></button>
                <button class="note" aria-label="Notifications"><sw-icon name="action" size="18"></sw-icon></button>
                <button class="show" aria-label="Bureau"></button>
            </div>`;
    }
}
customElements.define('win-taskbar', WinTaskbar);

class SwApp extends HTMLElement {
    constructor() {
        super();
        this.attachShadow({ mode: 'open' });
        this.shadowRoot.innerHTML = `
            <style>
                :host { display: flex; flex-direction: column; position: relative; height: 100vh; }
                main { display: flex; flex: 1; min-height: 0; }
                /* the command tabs lie over the top of the canvas */
                .doc { flex: 1; min-width: 0; display: grid; grid-template-columns: 247px 1fr; grid-template-rows: 22px 1fr auto; }
                sw-command-tabs { grid-area: 1 / 1 / 2 / 3; justify-self: start; z-index: 1; }
                sw-tree { grid-area: 2 / 1 / 3 / 2; }
                sw-canvas { grid-area: 1 / 2 / 3 / 3; }
                sw-sheet-tabs { grid-area: 3 / 1 / 4 / 3; }
                .gutter { width: 2px; border-left: 1px solid #bbb; background: #ececec; }
            </style>
            <sw-titlebar></sw-titlebar>
            <sw-viewbar></sw-viewbar>
            <sw-ribbon></sw-ribbon>
            <main>
                <div class="doc">
                    <sw-command-tabs></sw-command-tabs>
                    <sw-tree></sw-tree>
                    <sw-canvas></sw-canvas>
                    <sw-sheet-tabs></sw-sheet-tabs>
                </div>
                <div class="gutter"></div>
                <sw-task-pane></sw-task-pane>
            </main>
            <sw-status></sw-status>
            <win-taskbar></win-taskbar>
            <sw-tooltip><span slot="title">Fichier d'une version antérieure</span>Ce fichier sera converti lors de son enregistrement.</sw-tooltip>`;
    }
}
customElements.define('sw-app', SwApp);
</script>
</body>
</html>
